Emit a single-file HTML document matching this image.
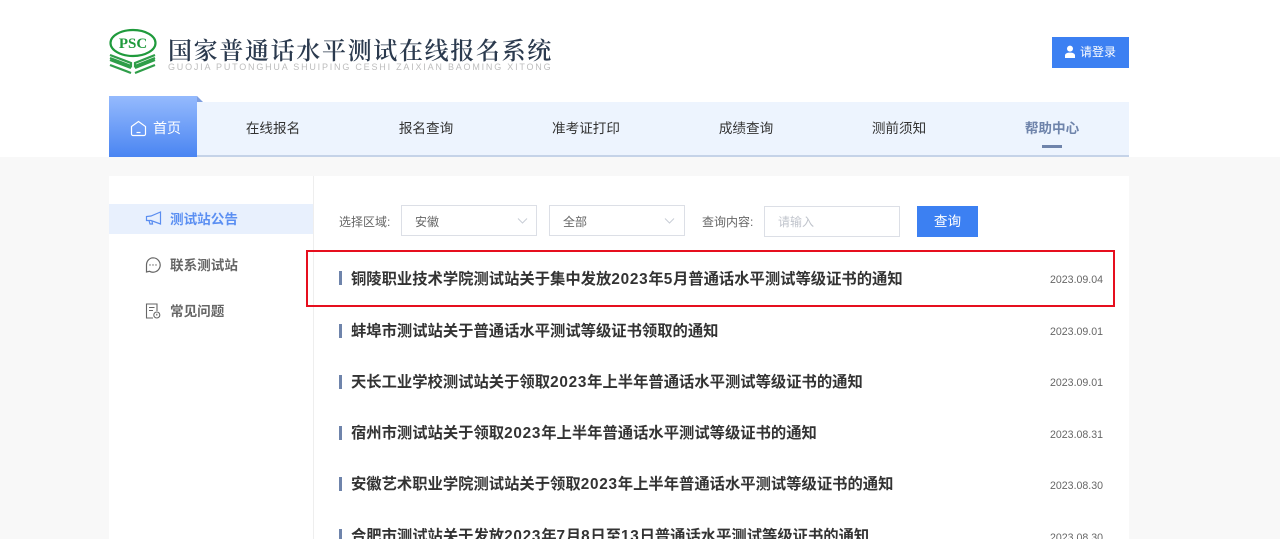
<!DOCTYPE html>
<html lang="zh">
<head>
<meta charset="utf-8">
<title>国家普通话水平测试在线报名系统</title>
<style>
html,body{margin:0;padding:0;width:1280px;height:539px;overflow:hidden;background:#fff}
body{position:relative;font-family:"Liberation Sans","Noto Sans CJK SC",sans-serif;color:#333}
.a{position:absolute;white-space:nowrap}
.nav{top:119px;height:19px;line-height:19px;font-size:13.6px;color:#333;text-align:center;width:100px}
.side{left:170px;font-size:13.6px;font-weight:bold;color:#666;line-height:20px;height:20px}
.t{left:351px;font-size:15.32px;font-weight:bold;color:#333;line-height:22px;height:22px}
.t i{font-style:normal;letter-spacing:.75px}
.bar{left:339px;width:3px;height:14px;background:#6f84ab}
.d{left:1050px;font-size:10.6px;color:#666;line-height:16px;height:16px;width:56px}
.lab{font-size:12px;color:#666;line-height:18px}
.box{box-sizing:border-box;border:1px solid #dcdfe6;background:#fff;height:31px;font-size:12px;color:#666;line-height:29px}
</style>
</head>
<body>
<div class="a" style="left:0;top:157px;width:1280px;height:382px;background:#f8f8f8"></div>

<svg class="a" style="left:108px;top:28px" width="50" height="49" viewBox="0 0 50 49">
<ellipse cx="25" cy="15" rx="22.5" ry="13" fill="#fff" stroke="#1f9a3c" stroke-width="2.2"/>
<text x="25" y="20" text-anchor="middle" font-family="Liberation Serif" font-weight="bold" font-size="15" fill="#1f9a3c">PSC</text>
<g fill="none" stroke="#2f9e49" stroke-width="2.2">
<path d="M2 27L23 35V38L2 30M2 32L23 40M2 37L23 45"/>
<path d="M47 27L27 35V38L47 30M47 32L27 40M47 37L27 45"/>
</g>
</svg>
<div class="a" style="left:168px;top:32px;font-family:'Noto Serif CJK SC',serif;font-size:24px;font-weight:600;line-height:34px;letter-spacing:1.66px;color:#2b3a4e">国家普通话水平测试在线报名系统</div>
<div class="a" style="left:168px;top:62px;font-size:9px;line-height:11px;letter-spacing:1.79px;color:#bdbdbd">GUOJIA PUTONGHUA SHUIPING CESHI ZAIXIAN BAOMING XITONG</div>

<div class="a" style="left:1052px;top:37px;width:77px;height:31px;background:#3c80f2"></div>
<svg class="a" style="left:1064px;top:45px" width="12" height="14" viewBox="0 0 12 14"><circle cx="6" cy="3.6" r="3" fill="#fff"/><path d="M1 13V10.5C1 8.5 3 7.6 6 7.6S11 8.5 11 10.5V13Z" fill="#fff"/></svg>
<div class="a" style="left:1080px;top:43px;font-size:12px;line-height:18px;color:#fff">请登录</div>

<div class="a" style="left:109px;top:102px;width:1020px;height:53px;background:#edf4fe"></div>
<div class="a" style="left:109px;top:155px;width:1020px;height:2px;background:#c5d3e8"></div>
<div class="a" style="left:109px;top:96px;width:88px;height:61px;background:linear-gradient(#95bafd,#4a85f2)"></div>
<div class="a" style="left:197px;top:96px;width:0;height:0;border-top:6px solid transparent;border-left:6px solid #7f9fe0;transform:none"></div>
<svg class="a" style="left:130px;top:120px" width="17" height="17" viewBox="0 0 17 17" fill="none" stroke="#fff" stroke-width="1.2"><path d="M1.5 6.5L8.5 1.5L15.5 6.5V14A1.5 1.5 0 0 1 14 15.5H3A1.5 1.5 0 0 1 1.5 14Z"/><path d="M6.5 12.5H10.5"/></svg>
<div class="a" style="left:153px;top:118px;font-size:14px;line-height:20px;color:#fff">首页</div>

<div class="a nav" style="left:223px">在线报名</div>
<div class="a nav" style="left:376px">报名查询</div>
<div class="a nav" style="left:536px">准考证打印</div>
<div class="a nav" style="left:696px">成绩查询</div>
<div class="a nav" style="left:849px">测前须知</div>
<div class="a nav" style="left:1002px;font-weight:bold;color:#6f84ab">帮助中心</div>
<div class="a" style="left:1042px;top:145px;width:20px;height:3px;background:#6f84ab"></div>

<div class="a" style="left:109px;top:176px;width:1020px;height:363px;background:#fff"></div>
<div class="a" style="left:313px;top:176px;width:1px;height:363px;background:#eeeeee"></div>
<div class="a" style="left:109px;top:204px;width:204px;height:30px;background:#e8f0fd"></div>

<svg class="a" style="left:145px;top:211px" width="17" height="15" viewBox="0 0 17 15" fill="none" stroke="#5a8df0" stroke-width="1.2"><path d="M15.5 1V13L6 9.5H1.5V5.5L6 5Z"/><path d="M4 9.5L5 13H7.5L7 10"/></svg>
<div class="a side" style="top:210px;color:#5b8ff2">测试站公告</div>
<svg class="a" style="left:145px;top:257px" width="16" height="16" viewBox="0 0 16 16" fill="none" stroke="#666" stroke-width="1.2"><path d="M8 .8A7.2 7.2 0 1 1 4.5 14.3L1.5 15V8A6.6 7.2 0 0 1 8 .8Z"/><circle cx="5" cy="8" r=".7" fill="#666" stroke="none"/><circle cx="8" cy="8" r=".7" fill="#666" stroke="none"/><circle cx="11" cy="8" r=".7" fill="#666" stroke="none"/></svg>
<div class="a side" style="top:256px">联系测试站</div>
<svg class="a" style="left:145px;top:303px" width="16" height="16" viewBox="0 0 16 16" fill="none" stroke="#666" stroke-width="1.1"><path d="M8 15H1.5V1H12V8"/><path d="M4 4.5H9.5M4 7.5H8"/><circle cx="11.8" cy="12" r="3"/><path d="M11.8 10.8V12.5"/></svg>
<div class="a side" style="top:302px">常见问题</div>

<div class="a lab" style="left:339px;top:213px">选择区域:</div>
<div class="a box" style="left:401px;top:205px;width:136px;padding-left:13px;line-height:33px">安徽</div>
<svg class="a" style="left:517px;top:217px" width="11" height="8" viewBox="0 0 11 8" fill="none" stroke="#c8cdd6" stroke-width="1"><path d="M1 1.5L5.5 6L10 1.5"/></svg>
<div class="a box" style="left:549px;top:205px;width:136px;padding-left:13px;line-height:33px">全部</div>
<svg class="a" style="left:664px;top:217px" width="11" height="8" viewBox="0 0 11 8" fill="none" stroke="#c8cdd6" stroke-width="1"><path d="M1 1.5L5.5 6L10 1.5"/></svg>
<div class="a lab" style="left:702px;top:213px">查询内容:</div>
<div class="a box" style="left:764px;top:206px;width:136px;padding-left:13px;color:#c0c4cc;line-height:31px">请输入</div>
<div class="a" style="left:917px;top:206px;width:61px;height:31px;background:#3c80f2;color:#fff;font-size:13.6px;line-height:32px;text-align:center">查询</div>

<div class="a bar" style="top:271px"></div>
<div class="a t" style="top:269px">铜陵职业技术学院测试站关于集中发放<i>2023</i>年<i>5</i>月普通话水平测试等级证书的通知</div>
<div class="a d" style="top:272px">2023.09.04</div>

<div class="a bar" style="top:324px"></div>
<div class="a t" style="top:321px">蚌埠市测试站关于普通话水平测试等级证书领取的通知</div>
<div class="a d" style="top:324px">2023.09.01</div>

<div class="a bar" style="top:375px"></div>
<div class="a t" style="top:372px">天长工业学校测试站关于领取<i>2023</i>年上半年普通话水平测试等级证书的通知</div>
<div class="a d" style="top:375px">2023.09.01</div>

<div class="a bar" style="top:426px"></div>
<div class="a t" style="top:423px">宿州市测试站关于领取<i>2023</i>年上半年普通话水平测试等级证书的通知</div>
<div class="a d" style="top:427px">2023.08.31</div>

<div class="a bar" style="top:477px"></div>
<div class="a t" style="top:474px">安徽艺术职业学院测试站关于领取<i>2023</i>年上半年普通话水平测试等级证书的通知</div>
<div class="a d" style="top:478px">2023.08.30</div>

<div class="a bar" style="top:529px"></div>
<div class="a t" style="top:526px">合肥市测试站关于发放<i>2023</i>年<i>7</i>月<i>8</i>日至<i>13</i>日普通话水平测试等级证书的通知</div>
<div class="a d" style="top:530px">2023.08.30</div>

<div class="a" style="left:306px;top:250px;width:809px;height:57px;box-sizing:border-box;border:2px solid #e60f1e"></div>
</body>
</html>
